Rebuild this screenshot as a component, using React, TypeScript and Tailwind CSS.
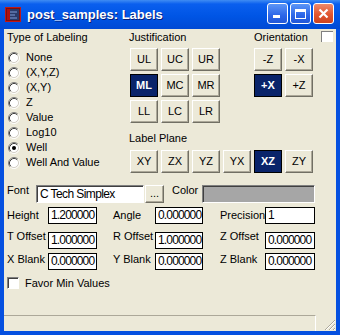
import React from 'react';

const FONT = "font-['Liberation_Sans',Arial,sans-serif]";

// classic raised push button (selected = dark toggle)
const Btn: React.FC<{ label: string; sel?: boolean; w?: string }> = ({ label, sel, w = 'w-[28px]' }) => (
  <div
    className={
      sel
        ? `${w} h-[23px] flex items-center justify-center border border-black bg-[#0A246A] text-white font-bold text-[11px]`
        : `${w} h-[23px] flex items-center justify-center border border-t-white border-l-white border-r-[#716F64] border-b-[#716F64] shadow-[inset_-1px_-1px_0_#ACA899] bg-[#ECE9D8] text-black text-[11px]`
    }
  >
    {label}
  </div>
);

const Radio: React.FC<{ label: string; on?: boolean }> = ({ label, on }) => (
  <div className="h-[15px] flex items-center pl-[1px]">
    <svg width="12" height="12" viewBox="0 0 12 12" className="shrink-0">
      <circle cx="6" cy="6" r="4.5" fill="#fff" />
      <path d="M2.11 9.89 A5.5 5.5 0 0 1 9.89 2.11" stroke="#808080" fill="none" />
      <path d="M9.89 2.11 A5.5 5.5 0 0 1 2.11 9.89" stroke="#fff" fill="none" />
      <path d="M2.82 9.18 A4.5 4.5 0 0 1 9.18 2.82" stroke="#404040" fill="none" />
      <path d="M9.18 2.82 A4.5 4.5 0 0 1 2.82 9.18" stroke="#D4D0C8" fill="none" />
      {on && <circle cx="6" cy="6" r="2" fill="#000" />}
    </svg>
    <span className="ml-[6px] text-[11px] leading-[13px]">{label}</span>
  </div>
);

const Field: React.FC<{ value: string; w: string }> = ({ value, w }) => (
  <div className={`${w} h-[17px] border border-black bg-white pl-[2px] text-[12px] leading-[15px] tracking-[-0.85px] overflow-hidden whitespace-nowrap`}>
    {value}
  </div>
);

const Label: React.FC<{ text: string; w: string; m?: string }> = ({ text, w, m = '' }) => (
  <span className={`${w} ${m} text-[11px] leading-[13px] whitespace-nowrap`}>{text}</span>
);

export default function App() {
  const types = ['None', '(X,Y,Z)', '(X,Y)', 'Z', 'Value', 'Log10', 'Well', 'Well And Value'];
  return (
    <div className={`w-[340px] h-[335px] flex flex-col bg-[#0550E0] ${FONT} text-black`}>
      {/* title bar */}
      <div className="h-[29px] shrink-0 flex items-center bg-[linear-gradient(180deg,#3F8CF3_0%,#0A5FEE_14%,#0055E5_55%,#0049D4_100%)]">
        <svg width="16" height="16" viewBox="0 0 16 16" className="ml-[5px] mt-[1px]">
          <rect x="0.5" y="0.5" width="15" height="14" fill="#7A1010" stroke="#C01818" />
          <rect x="2" y="2" width="12" height="11" fill="#2A3A6A" />
          <path d="M3 5h9M3 8h7M3 11h9" stroke="#7F9BD8" strokeWidth="1" />
          <rect x="2" y="2" width="3" height="11" fill="#B01010" />
        </svg>
        <span className="ml-[6px] text-white font-bold text-[13px] leading-[16px] [text-shadow:1px_1px_0_#0A1F78]">
          post_samples: Labels
        </span>
        <div className="ml-auto mr-[6px] flex gap-[2px] mt-[-2px]">
          <div className="w-[21px] h-[21px] rounded-[3px] border border-white bg-[linear-gradient(180deg,#5C96F6,#2C66E8_60%,#2157D8)] flex items-end pl-[5px] pb-[5px]">
            <div className="w-[7px] h-[3px] bg-white" />
          </div>
          <div className="w-[21px] h-[21px] rounded-[3px] border border-white bg-[linear-gradient(180deg,#5C96F6,#2C66E8_60%,#2157D8)] flex items-center justify-center">
            <div className="w-[11px] h-[10px] border border-white border-t-[3px]" />
          </div>
          <div className="w-[21px] h-[21px] rounded-[3px] border border-white bg-[linear-gradient(180deg,#EE8A6C,#E1552F_55%,#CC4320)] flex items-center justify-center">
            <svg width="11" height="11" viewBox="0 0 11 11">
              <path d="M1.5 1.5L9.5 9.5M9.5 1.5L1.5 9.5" stroke="#fff" strokeWidth="2.2" />
            </svg>
          </div>
        </div>
      </div>

      {/* window body */}
      <div className="flex-1 flex px-[4px] pb-[4px] min-h-0">
        <div className="flex-1 flex flex-col bg-[#ECE9D8]">
          <div className="flex">
            {/* Type of Labeling */}
            <div className="w-[125px] pl-[3px] pt-[2px]">
              <div className="text-[11px] leading-[13px]">Type of Labeling</div>
              <div className="mt-[6px]">
                {types.map((t) => (
                  <Radio key={t} label={t} on={t === 'Well'} />
                ))}
              </div>
            </div>

            {/* Justification / Orientation / Label Plane */}
            <div className="pt-[2px]">
              <div className="flex h-[13px]">
                <span className="w-[125px] text-[11px] leading-[13px]">Justification</span>
                <span className="w-[67px] text-[11px] leading-[13px]">Orientation</span>
                <div className="w-[12px] h-[11px] border-t border-l border-t-[#808080] border-l-[#808080] bg-white" />
              </div>
              <div className="ml-[1px] mt-[4px] flex gap-[3px]">
                <Btn label="UL" />
                <Btn label="UC" />
                <Btn label="UR" />
                <div className="w-[28px]" />
                <Btn label="-Z" />
                <Btn label="-X" />
              </div>
              <div className="ml-[1px] mt-[3px] flex gap-[3px]">
                <Btn label="ML" sel />
                <Btn label="MC" />
                <Btn label="MR" />
                <div className="w-[28px]" />
                <Btn label="+X" sel />
                <Btn label="+Z" />
              </div>
              <div className="ml-[1px] mt-[3px] flex gap-[3px]">
                <Btn label="LL" />
                <Btn label="LC" />
                <Btn label="LR" />
              </div>
              <div className="mt-[9px] text-[11px] leading-[13px]">Label Plane</div>
              <div className="ml-[1px] mt-[5px] flex gap-[3px]">
                <Btn label="XY" />
                <Btn label="ZX" />
                <Btn label="YZ" />
                <Btn label="YX" />
                <Btn label="XZ" sel />
                <Btn label="ZY" />
              </div>
            </div>
          </div>

          {/* font / numeric settings */}
          <div className="pl-[3px]">
            <div className="mt-[12px] flex items-start h-[18px]">
              <Label text="Font" w="w-[29px]" m="-mt-px" />
              <div className="w-[108px] h-[18px] border border-t-[#808080] border-l-[#808080] border-b-white border-r-white shadow-[inset_1px_1px_0_#404040] bg-white pl-[3px] text-[12px] leading-[16px] tracking-[-0.6px] whitespace-nowrap">
                C Tech Simplex
              </div>
              <div className="ml-[1px] w-[19px] h-[18px] flex items-center justify-center border border-t-white border-l-white border-r-[#716F64] border-b-[#716F64] shadow-[inset_-1px_-1px_0_#ACA899] text-[11px] leading-[11px] pb-[2px]">
                ...
              </div>
              <Label text="Color" w="w-[30px]" m="ml-[8px] -mt-px" />
              <div className="w-[113px] h-[18px] border border-t-[#808080] border-l-[#808080] border-b-white border-r-white shadow-[inset_1px_1px_0_#404040] bg-[#A6A6A6]" />
            </div>

            <div className="mt-[4px] flex items-start h-[17px]">
              <Label text="Height" w="w-[41px]" m="mt-[2px]" />
              <Field value="1.200000" w="w-[49px]" />
              <Label text="Angle" w="w-[42px]" m="ml-[16px] mt-[2px]" />
              <Field value="0.000000" w="w-[48px]" />
              <Label text="Precision" w="w-[45px]" m="ml-[17px] mt-[2px]" />
              <Field value="1" w="w-[50px]" />
            </div>

            <div className="mt-[8px] flex items-start h-[17px]">
              <Label text="T Offset" w="w-[41px]" m="-mt-[2px]" />
              <Field value="1.000000" w="w-[49px]" />
              <Label text="R Offset" w="w-[42px]" m="ml-[16px] -mt-[2px]" />
              <Field value="1.000000" w="w-[48px]" />
              <Label text="Z Offset" w="w-[45px]" m="ml-[17px] -mt-[2px]" />
              <Field value="0.000000" w="w-[50px]" />
            </div>

            <div className="mt-[4px] flex items-start h-[17px]">
              <Label text="X Blank" w="w-[41px]" />
              <Field value="0.000000" w="w-[49px]" />
              <Label text="Y Blank" w="w-[42px]" m="ml-[16px]" />
              <Field value="0.000000" w="w-[48px]" />
              <Label text="Z Blank" w="w-[45px]" m="ml-[17px]" />
              <Field value="0.000000" w="w-[50px]" />
            </div>

            <div className="mt-[7px] flex items-center h-[12px]">
              <div className="w-[12px] h-[12px] border border-t-[#808080] border-l-[#808080] border-b-white border-r-white shadow-[inset_1px_1px_0_#404040] bg-white" />
              <span className="ml-[6px] text-[11px] leading-[13px]">Favor Min Values</span>
            </div>
          </div>

          <div className="flex-1" />

          {/* status bar */}
          <div className="h-[16px] flex shrink-0">
            <div className="flex-1 border-t border-r border-t-[#ACA899] border-r-white" />
            <div className="w-[20px] flex items-end justify-end">
              <svg width="12" height="12" viewBox="0 0 12 12">
                <path d="M11 1L1 11M11 5L5 11M11 9L9 11" stroke="#ACA899" strokeWidth="1" />
                <path d="M11 2L2 11M11 6L6 11M11 10L10 11" stroke="#fff" strokeWidth="1" />
              </svg>
            </div>
          </div>
        </div>
      </div>
    </div>
  );
}
